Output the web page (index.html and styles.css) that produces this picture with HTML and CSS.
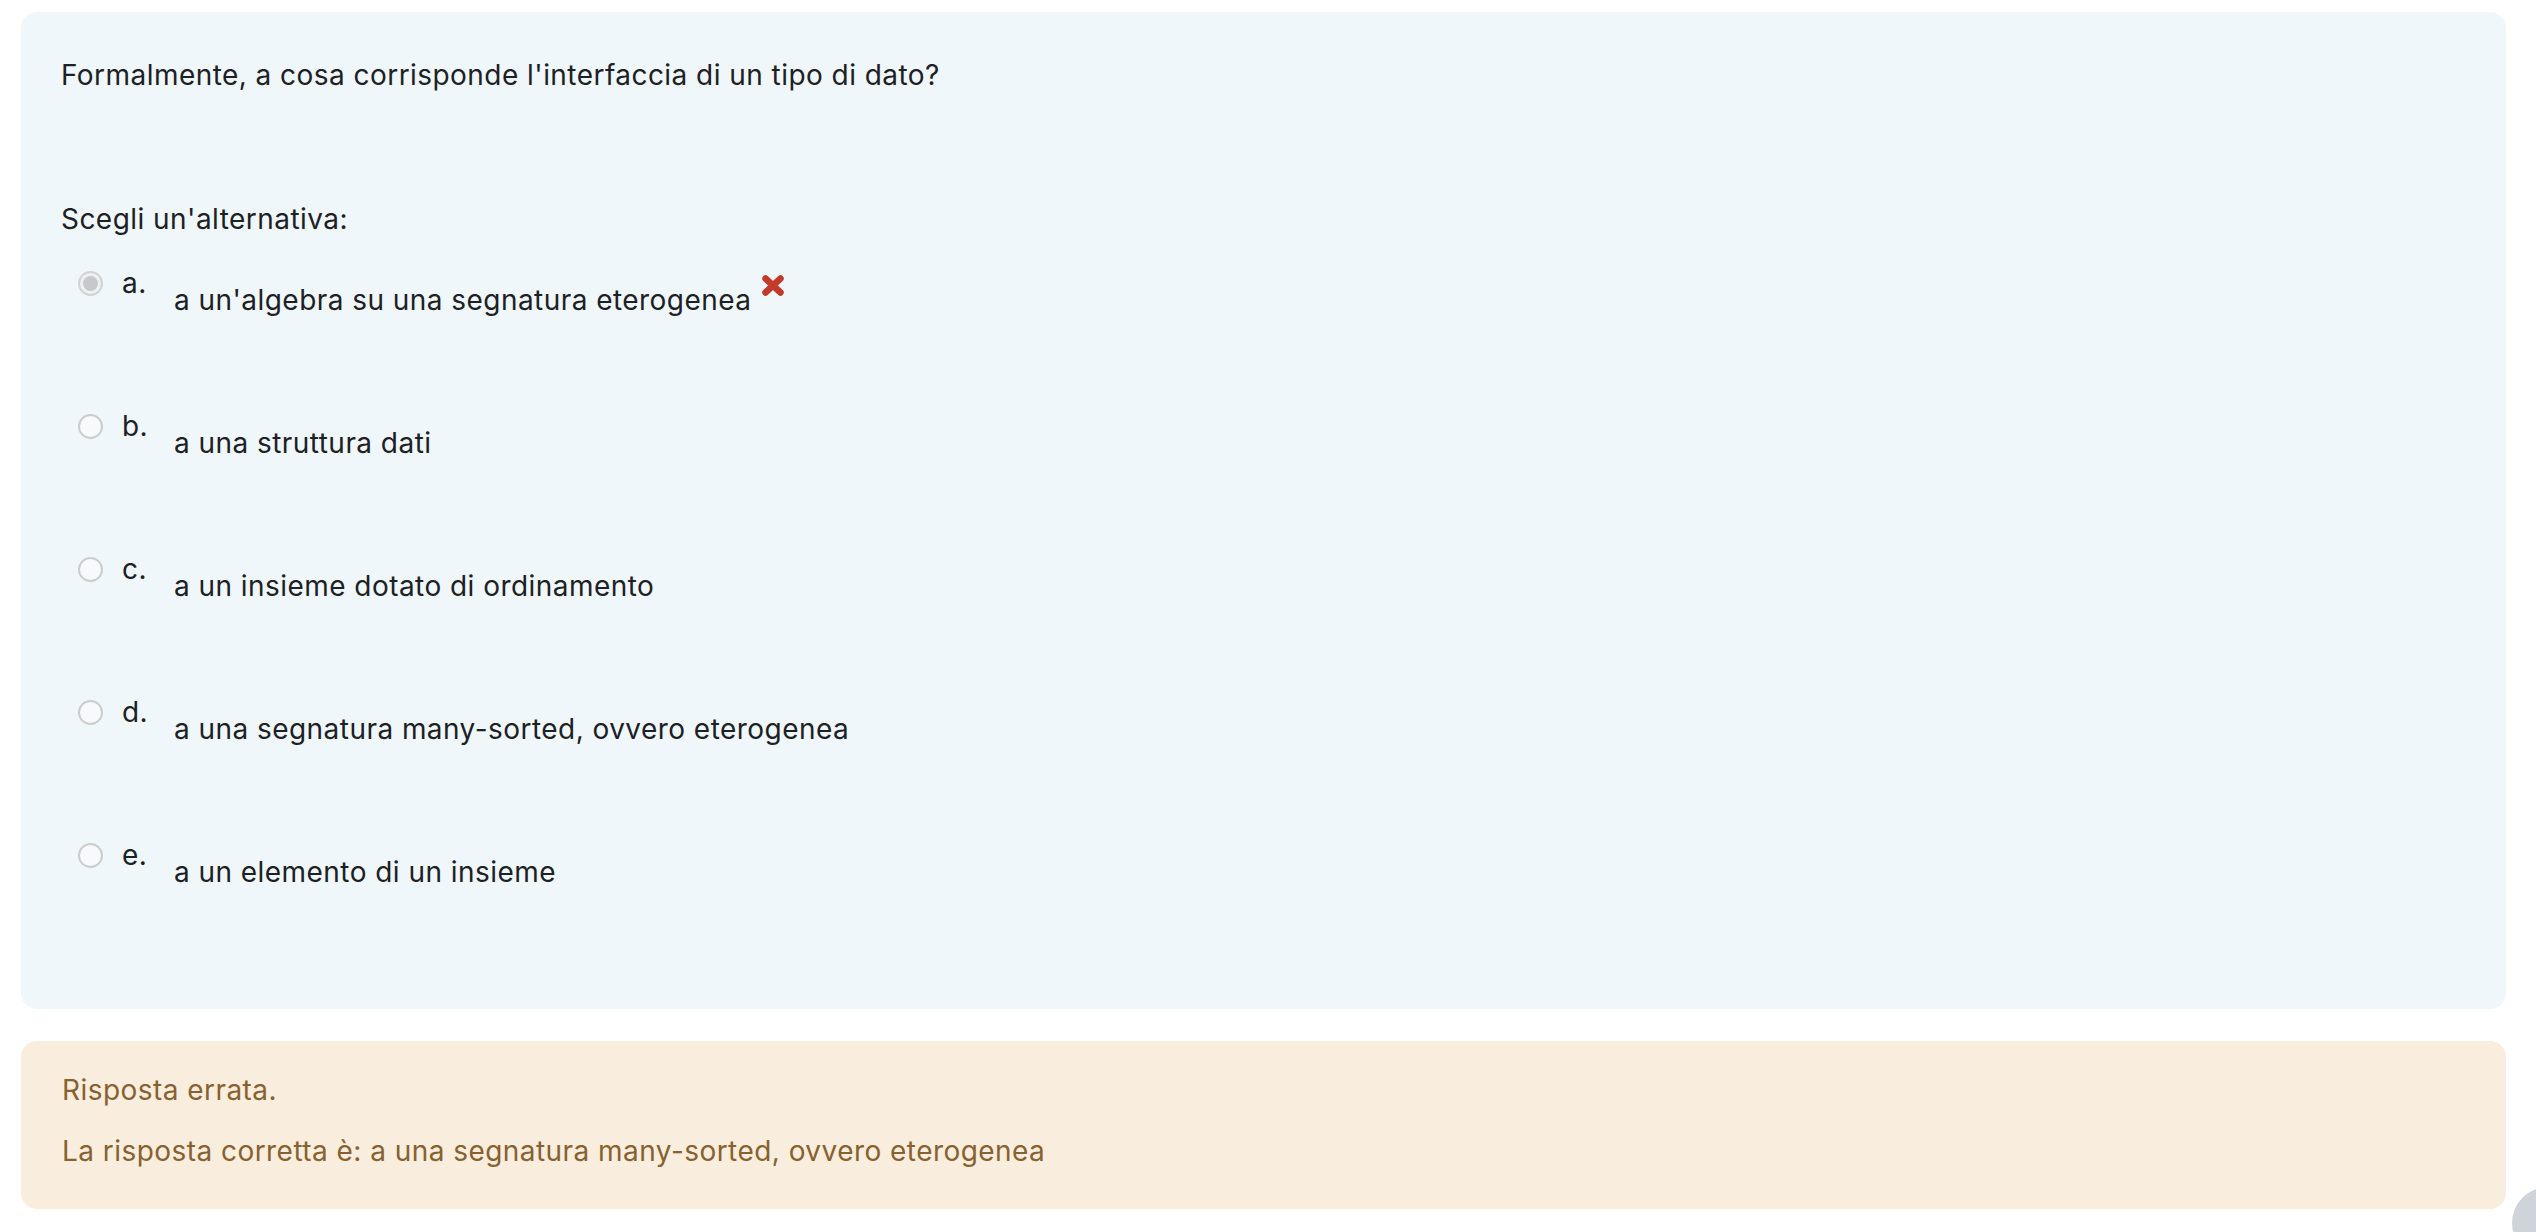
FILE: index.html
```html
<!DOCTYPE html>
<html lang="it">
<head>
<meta charset="utf-8">
<title>Domanda</title>
<link rel="stylesheet" href="styles.css">
</head>
<body>
<div class="que">
  <div class="formulation">
    <div class="qtext">Formalmente, a cosa corrisponde l'interfaccia di un tipo di dato?</div>
    <div class="prompt">Scegli un'alternativa:</div>
    <div class="answers">
      <div class="answer">
        <span class="radio checked"></span>
        <span class="num">a.</span>
        <div class="text">a un'algebra su una segnatura eterogenea<svg class="wrong" viewBox="0 0 24 21" width="24" height="21"><path d="M4.5 3.5 L19.5 17.5 M19.5 3.5 L4.5 17.5" stroke="#c23b2a" stroke-width="6.5" stroke-linecap="round" fill="none"/></svg></div>
      </div>
      <div class="answer">
        <span class="radio"></span>
        <span class="num">b.</span>
        <div class="text">a una struttura dati</div>
      </div>
      <div class="answer">
        <span class="radio"></span>
        <span class="num">c.</span>
        <div class="text">a un insieme dotato di ordinamento</div>
      </div>
      <div class="answer">
        <span class="radio"></span>
        <span class="num">d.</span>
        <div class="text">a una segnatura many-sorted, ovvero eterogenea</div>
      </div>
      <div class="answer">
        <span class="radio"></span>
        <span class="num">e.</span>
        <div class="text">a un elemento di un insieme</div>
      </div>
    </div>
  </div>
  <div class="outcome">
    <div class="feedback-line">Risposta errata.</div>
    <div class="feedback-line second">La risposta corretta è: a una segnatura many-sorted, ovvero eterogenea</div>
  </div>
</div>
<div class="totop"></div>
</body>
</html>
```
FILE: styles.css
```css
html, body {
  margin: 0;
  background: #ffffff;
}
body {
  padding: 12px 30px 0 21px;
  font-family: Inter, "Noto Sans", "Liberation Sans", sans-serif;
  font-size: 28px;
  line-height: 42px;
  letter-spacing: 0.45px;
  color: #1d2125;
  overflow: hidden;
}
.formulation {
  background: #eff7fa;
  border-radius: 16px;
  padding: 42px 40px 0 40px;
  height: 997px;
  box-sizing: border-box;
}
.qtext {
  height: 42px;
}
.prompt {
  margin-top: 102px;
}
.answers {
  margin-top: 22px;
  padding-left: 17px;
}
.answer {
  display: flex;
  align-items: flex-start;
  height: 143px;
}
.radio {
  width: 25px;
  height: 25px;
  border-radius: 50%;
  border: 2px solid #cacccf;
  background: #f8f9fa;
  box-sizing: border-box;
  margin-top: 9px;
  flex: none;
  display: flex;
  align-items: center;
  justify-content: center;
}
.radio.checked {
  border-color: #d0d2d5;
  background: #eef0f1;
}
.radio.checked::after {
  content: "";
  width: 15px;
  height: 15px;
  border-radius: 50%;
  background: #c6c8cb;
}
.num {
  margin-left: 19px;
  width: 52px;
  flex: none;
}
.text {
  padding-top: 17px;
}
.wrong {
  vertical-align: top;
  margin-left: 10px;
  margin-top: -4px;
}
.outcome {
  margin-top: 32px;
  background: #f9eddd;
  border-radius: 16px;
  padding: 28px 40px 37px 41px;
  color: #87612f;
}
.feedback-line.second {
  margin-top: 19px;
}
.totop {
  position: fixed;
  left: 2512px;
  top: 1187px;
  width: 72px;
  height: 72px;
  border-radius: 50%;
  background: #cfd4da;
}
```
